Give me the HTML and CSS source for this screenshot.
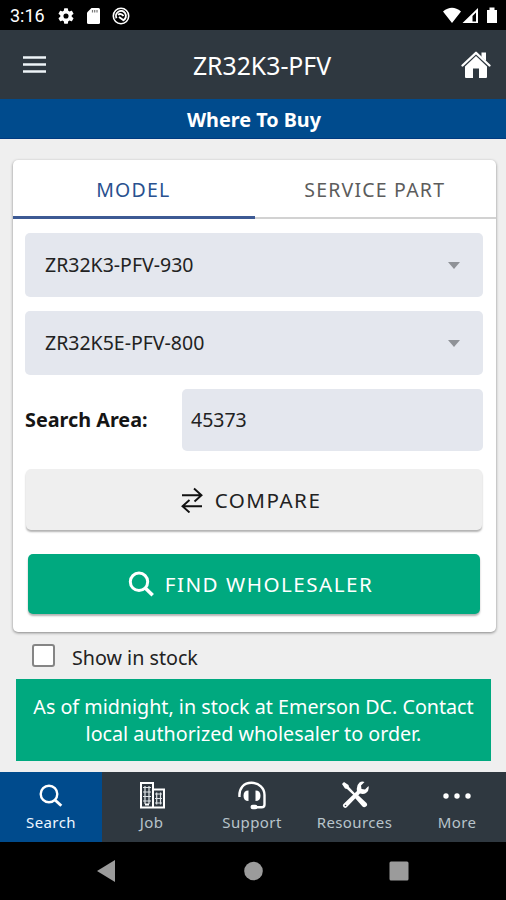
FILE: index.html
```html
<!DOCTYPE html>
<html lang="en">
<head>
<meta charset="utf-8">
<title>ZR32K3-PFV</title>
<link rel="stylesheet" href="styles.css">
</head>
<body>
<div class="status">
  <span class="time">3:16</span>
  <svg class="s-gear" width="16" height="16" viewBox="2 2 20 20"><path fill="#fff" fill-rule="evenodd" d="M19.14 12.94a7 7 0 0 0 0-1.88l2.03-1.58a.5.5 0 0 0 .12-.61l-1.92-3.32a.5.5 0 0 0-.59-.22l-2.39.96a7 7 0 0 0-1.62-.94l-.36-2.54a.5.5 0 0 0-.48-.41h-3.84a.5.5 0 0 0-.47.41l-.36 2.54a7 7 0 0 0-1.62.94l-2.39-.96a.5.5 0 0 0-.59.22L2.74 8.87a.5.5 0 0 0 .12.61l2.03 1.58a7 7 0 0 0 0 1.88l-2.03 1.58a.5.5 0 0 0-.12.61l1.92 3.32c.12.22.37.29.59.22l2.39-.96c.5.38 1.03.7 1.62.94l.36 2.54c.05.24.24.41.48.41h3.84c.24 0 .44-.17.47-.41l.36-2.54a7 7 0 0 0 1.62-.94l2.39.96c.22.08.47 0 .59-.22l1.92-3.32a.5.5 0 0 0-.12-.61zM12 15.2a3.2 3.2 0 1 1 0-6.4 3.2 3.2 0 0 1 0 6.4z"/></svg>
  <svg class="s-card" width="13" height="16" viewBox="0 0 13 16"><path fill="#fff" d="M4.500 0H11.500Q13 0 13 1.500V14.500Q13 16 11.500 16H1.500Q0 16 0 14.500V4.500z"/><path stroke="#777" stroke-width="1.200" d="M5.500 2v2.500M7.700 2v2.500M10 2v2.500"/></svg>
  <svg class="s-sync" width="18" height="18" viewBox="0 0 18 18" fill="none" stroke="#fff"><circle cx="9" cy="9" r="7.700" stroke-width="1.600"/><path stroke-width="1.900" d="M4.500 11.200a5 5 0 0 1 8.500-5.200a5 5 0 0 1-2.300 7.600M6 7.800c2-1.600 4-.8 5.500 1.200M7 10l4.500 3.300"/></svg>
  <svg class="s-right" width="55" height="17" viewBox="0 0 55 17"><path fill="#fff" d="M0 4.500Q9 -3 18 4.500L9 16zM44 3h2.500V.5h5V3H54v13H44z"/><path fill="#fff" fill-rule="evenodd" d="M19.500 16L35 1v15zM29.500 9v5.500H33V5.500z"/></svg>
</div>
<header class="header">
  <svg class="menu" width="23" height="17" viewBox="0 0 23 17"><path stroke="#eef4f8" stroke-width="2.700" d="M0 1.500h23M0 8.500h23M0 15.500h23"/></svg>
  <h1>ZR32K3-PFV</h1>
  <svg class="home" width="30" height="28" viewBox="0 0 30 28"><path fill="#fff" d="M15 5L26 15.400v10.600Q26 27 25 27H18V17.500h-6V27H5Q4 27 4 26V15.400zM20.500 1.500h4.500v8.500l-4.500-4z"/><path fill="none" stroke="#fff" stroke-width="2.300" stroke-linecap="round" stroke-linejoin="round" d="M1.500 14.500L15 1.800L28.500 14.500"/></svg>
</header>
<div class="banner">Where To Buy</div>
<main class="main">
  <section class="card">
    <nav class="tabs"><div class="tab active"><span>MODEL</span></div><div class="tab"><span>SERVICE PART</span></div></nav>
    <div class="form">
      <div class="select"><span>ZR32K3-PFV-930</span><i class="caret"></i></div>
      <div class="select"><span>ZR32K5E-PFV-800</span><i class="caret"></i></div>
      <div class="area"><label>Search Area:</label><div class="zip">45373</div></div>
      <div class="btn compare">
        <svg width="22" height="26" viewBox="0 0 22 26" fill="none" stroke="#111" stroke-width="1.900"><path d="M1 8.200h19.500M13 1.500l7.500 6.700l-7 6.300M21 19.200H1.500M8.500 25.500l-7-6.300l7-6.200"/></svg>
        <span>COMPARE</span>
      </div>
      <div class="btn find">
        <svg width="26" height="26" viewBox="0 0 26 26" fill="none" stroke="#fff"><circle cx="11" cy="10.800" r="8.700" stroke-width="3"/><path stroke-width="3.600" d="M17.200 17l7.500 7.200"/></svg>
        <span>FIND WHOLESALER</span>
      </div>
    </div>
  </section>
  <div class="stock"><i class="box"></i><span>Show in stock</span></div>
  <div class="notice"><div class="line">As of midnight, in stock at Emerson DC. Contact</div><div class="line">local authorized wholesaler to order.</div></div>
</main>
<nav class="bottom">
  <div class="item on"><svg width="28" height="30" viewBox="0 0 28 30" fill="none" stroke="#fff"><circle cx="12" cy="14" r="8.300" stroke-width="2.400"/><path stroke-width="2.900" d="M18 20l6.300 5.800"/></svg><span>Search</span></div>
  <div class="item"><svg width="28" height="30" viewBox="0 0 28 30" fill="none" stroke="#fff"><path stroke-width="2" d="M3 3h12v24.500H3zM15 9.500h11V27.500H15"/><path stroke-width="1.200" stroke="#dfe4e7" d="M7 6v18M11 6v18M5 7.500h8M5 12h8M5 16.500h8M5 21h8M18.700 12.500v12M22.500 12.500v12M17 14h7M17 18.500h7M17 23h7"/><path stroke-width="2" d="M7 24.500h4"/></svg><span>Job</span></div>
  <div class="item"><svg width="30" height="30" viewBox="0 0 30 30" fill="none" stroke="#fff" stroke-width="2.400"><path d="M2.500 17C1.800 8 7 2.800 14.500 2.800S27.500 8 27.500 15v9.500q0 2.800-2.800 2.800H18"/><path fill="#fff" stroke="none" d="M11.500 10.500v10.500Q6.500 21 6.500 15.800t5-5.300zM18.500 10.500v10.500Q23.500 21 23.500 15.800t-5-5.300z"/><rect x="13.500" y="24.800" width="7" height="4.400" rx="2.200" fill="#fff" stroke="none"/></svg><span>Support</span></div>
  <div class="item"><svg width="28" height="30" viewBox="0 0 28 30"><path fill="#fff" d="M1 4l2-2l4.500 3l.5 2l7 7.500l-1.500 1.500L6 9L4 8.500zM14 18l3-3l8.500 8q1.500 2-.5 3.500t-3.500 0z"/><path fill="#fff" d="M3 27.500q-2-1.500-.5-3.500L16 11q-1-5.500 2.500-8.500Q21 1 23.500 2L20 5.500l.5 3.500l3.500.5L27.500 6q1 5-2.500 7q-2.500 1.500-6 .5L6 27q-1.500 1.500-3 .5z"/><circle cx="4.500" cy="25.500" r=".8" fill="#2f3840"/></svg><span>Resources</span></div>
  <div class="item more"><svg width="30" height="30" viewBox="0 0 30 30" fill="#fff"><circle cx="4" cy="16" r="2.700"/><circle cx="15" cy="16" r="2.700"/><circle cx="26" cy="16" r="2.700"/></svg><span>More</span></div>
</nav>
<div class="system">
  <svg width="506" height="58" viewBox="0 0 506 58" fill="#9b9b9b"><path d="M97 29l18-11v22z"/><circle cx="253.500" cy="29" r="9.300"/><rect x="389.500" y="19.500" width="19" height="19" rx="1.500"/></svg>
</div>
</body>
</html>
```
FILE: styles.css
```css
* { box-sizing: border-box; }
body { margin: 0; width: 506px; height: 900px; overflow: hidden; background: #efefef; font-family: "Noto Sans", "Open Sans", sans-serif; font-size: 19.5px; color: #222; display: flex; flex-direction: column; }
svg { display: block; flex: none; }
span, h1, label { white-space: nowrap; }
.status { height: 30px; background: #000; display: flex; align-items: center; padding: 1px 8px 0 10px; color: #fff; }
.time { font: 400 18px/30px Roboto, sans-serif; width: 48px; }
.s-card { margin-left: 13px; }
.s-sync { margin-left: 12px; }
.s-right { margin-left: auto; }
.header { height: 69px; background: #2f3840; display: grid; grid-template-columns: 60px 1fr 60px; align-items: center; color: #fff; }
.menu { margin-left: 23px; }
.header h1 { margin: 0; font-size: 24.8px; font-weight: 400; line-height: 30px; text-align: center; padding-left: 18px; }
.home { margin-left: 15px; }
.banner { height: 40px; background: #004b8d; border-bottom: 1px solid #003a80; color: #fff; font-weight: 700; font-size: 19.8px; line-height: 41px; text-align: center; padding-left: 2px; }
.main { height: 633px; padding: 21px 0 0; flex: none; }
.card { width: 483px; height: 472px; margin-left: 13px; background: #fff; border-radius: 5px; box-shadow: 0 1px 3px rgba(0,0,0,.45); }
.tabs { height: 59px; display: flex; }
.tab { width: 50%; border-bottom: 2px solid #d2d2d2; text-align: center; line-height: 60px; letter-spacing: 1.2px; color: #5c5c5c; padding-right: 1px; }
.tab.active { border-bottom: 3px solid #3d5a94; color: #29518f; }
.form { padding: 14px 13px 0 12px; }
.select { height: 64px; margin-bottom: 14px; border-radius: 5px; background: #e4e7ee; display: flex; align-items: center; justify-content: space-between; padding: 0 23px 0 20px; }
.select span { padding-bottom: 2px; }
.caret { border: 6px solid transparent; border-top: 7px solid #8f9297; border-bottom: 0; }
.area { display: flex; height: 62px; align-items: center; }
.area label { width: 157px; font-weight: 700; font-size: 19.8px; color: #151515; padding-bottom: 2px; }
.zip { flex: 1; height: 62px; line-height: 62px; padding-left: 9px; border-radius: 5px; background: #e4e7ee; }
.btn { display: flex; align-items: center; justify-content: center; border-radius: 5px; letter-spacing: 1.5px; font-size: 20.6px; box-shadow: 0 2px 2px rgba(0,0,0,.3); }
.compare { height: 61px; margin: 18px 1px 0; gap: 12px; background: #efefef; padding-right: 6px; }
.find { height: 60px; margin: 24px 3px 0; gap: 11px; background: #00a97f; color: #fff; padding-right: 7px; }
.find span { padding-bottom: 1px; }
.stock { height: 47px; display: flex; align-items: center; padding: 4px 0 0 32px; font-size: 19.7px; }
.box { width: 23px; height: 23px; border: 2px solid #858585; border-radius: 3px; background: #fff; margin: 0 17px 4px 0; }
.notice { margin: 0 15px 0 16px; height: 82px; background: #00a97f; color: #fff; font-size: 19.7px; line-height: 27px; padding-top: 14px; text-align: center; white-space: nowrap; }
.bottom { height: 70px; background: #2f3840; display: grid; grid-template-columns: 102px 99px 102px 103px 100px; }
.item { display: flex; flex-direction: column; align-items: center; padding-top: 8px; color: #b8c4cb; font-size: 15px; line-height: 22px; letter-spacing: .4px; }
.item span { padding-top: 1px; }
.item.on { background: #004b8d; color: #eef6ff; }
.more { padding-left: 2px; }
.system { height: 58px; background: #000; }
```
